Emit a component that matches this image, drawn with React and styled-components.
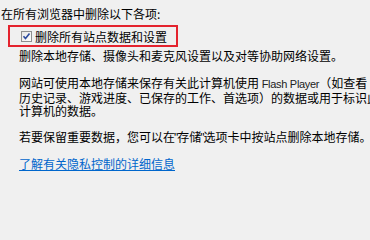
import React from "react";
import styled, { createGlobalStyle } from "styled-components";

const Global = createGlobalStyle`
  html, body { margin: 0; padding: 0; background: #f0f0f0; }
  body {
    width: 370px; height: 200px; overflow: hidden;
    font-family: "Noto Sans CJK SC", "Noto Sans", sans-serif;
    font-size: 12px; color: #000;
  }
`;

const Page = styled.div`
  display: flex;
  flex-direction: column;
  align-items: flex-start;
  padding: 7px 0 0 1px;
  width: 420px;
  line-height: 13px;
`;

const Heading = styled.div`
  white-space: nowrap;
`;

const Highlight = styled.div`
  display: inline-flex;
  align-items: center;
  gap: 3px;
  margin: 5px 0 0 7px;
  height: 18px;
  padding: 0 9px 0 11px;
  border: 2px solid #e4232e;
`;

const Box = styled.span`
  display: inline-flex;
  width: 11px;
  height: 11px;
`;

const Label = styled.span`
  white-space: nowrap;
`;

const Para = styled.p`
  margin: ${(p) => p.$top}px 0 0 18px;
  white-space: nowrap;
`;

const Latin = styled.span`
  font-family: "Liberation Sans", Arial, sans-serif;
  font-size: 11px;
  letter-spacing: -0.3px;
  color: #222;
`;

const Quote = styled.span`
  font-family: "Liberation Sans", Arial, sans-serif;
  margin: 0 -1px;
`;

const Link = styled.a`
  margin: 12px 0 0 18px;
  color: #0066cc;
  text-decoration: underline;
  white-space: nowrap;
  cursor: pointer;
`;

function Check() {
  return (
    <Box>
      <svg width="11" height="11" viewBox="0 0 11 11">
        <defs>
          <linearGradient id="cb" x1="0" y1="0" x2="1" y2="1">
            <stop offset="0" stopColor="#e4e4e4" />
            <stop offset="1" stopColor="#ffffff" />
          </linearGradient>
        </defs>
        <rect x="0.5" y="0.5" width="10" height="10" fill="url(#cb)" stroke="#8e8f8f" />
        <path d="M2.5 5.2 L4.5 7.5 L8.5 2.5" fill="none" stroke="#2b4a9e" strokeWidth="1.6" />
      </svg>
    </Box>
  );
}

export default function App() {
  return (
    <>
      <Global />
      <Page>
        <Heading>在所有浏览器中删除以下各项:</Heading>
        <Highlight>
          <Check />
          <Label>删除所有站点数据和设置</Label>
        </Highlight>
        <Para $top={2}>删除本地存储、摄像头和麦克风设置以及对等协助网络设置。</Para>
        <Para $top={14}>
          网站可使用本地存储来保存有关此计算机使用 <Latin>Flash Player</Latin>（如查看
          <br />
          历史记录、游戏进度、已保存的工作、首选项）的数据或用于标识此
          <br />
          计算机的数据。
        </Para>
        <Para $top={13}>
          若要保留重要数据，您可以在<Quote>"</Quote>存储<Quote>"</Quote>选项卡中按站点删除本地存储。
        </Para>
        <Link>了解有关隐私控制的详细信息</Link>
      </Page>
    </>
  );
}
